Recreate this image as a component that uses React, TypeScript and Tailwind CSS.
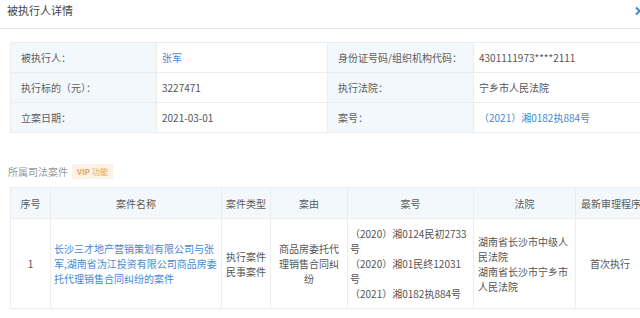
import { ReactNode } from "react";

const font = { fontFamily: '"Noto Sans CJK SC", "Liberation Sans", sans-serif' };

function Label({ children }: { children: ReactNode }) {
  return <td className="bg-[#f3f8fc] border border-[#ededed] pl-[10px] text-[#5c5c5c]">{children}</td>;
}

function Value({ children, link }: { children: ReactNode; link?: boolean }) {
  return (
    <td className={`border border-[#ededed] pl-[5px] ${link ? "text-[#3f8ad6]" : "text-[#555]"}`}>
      {children}
    </td>
  );
}

export default function App() {
  return (
    <div className="w-[640px] h-[318px] overflow-hidden bg-white text-[10px] leading-[15px]" style={font}>
      <div className="flex h-[29px] items-start justify-between border-b border-[#e6e6e6] pl-[7px] pt-[3px]">
        <h2 className="text-[11px] leading-[15px] text-[#444]">被执行人详情</h2>
        <svg width="8" height="10" viewBox="0 0 8 10" className="mt-[3px] mr-[-2px]">
          <path d="M2 1.5 L5.5 5 L2 8.5" stroke="#3f8ad6" strokeWidth="2" fill="none" />
        </svg>
      </div>

      <div className="pl-[10px] pt-[13px]">
        <table className="w-[640px] table-fixed border-collapse">
          <colgroup>
            <col className="w-[146px]" />
            <col className="w-[171px]" />
            <col className="w-[146px]" />
            <col />
          </colgroup>
          <tbody>
            <tr className="h-[30px]">
              <Label>被执行人：</Label>
              <Value link>张军</Value>
              <Label>身份证号码/组织机构代码：</Label>
              <Value>4301111973****2111</Value>
            </tr>
            <tr className="h-[30px]">
              <Label>执行标的（元）：</Label>
              <Value>3227471</Value>
              <Label>执行法院：</Label>
              <Value>宁乡市人民法院</Value>
            </tr>
            <tr className="h-[30px]">
              <Label>立案日期：</Label>
              <Value>2021-03-01</Value>
              <Label>案号：</Label>
              <Value link>（2021）湘0182执884号</Value>
            </tr>
          </tbody>
        </table>
      </div>

      <div className="flex items-center gap-[4px] pl-[8px] pt-[31px]">
        <span className="text-[#999]">所属司法案件</span>
        <span className="flex h-[15px] items-center bg-[#fcf1e5] px-[5px] text-[8px] text-[#e4a565]">
          <b className="mr-[2px] font-bold">VIP</b>功能
        </span>
      </div>

      <div className="pl-[10px] pt-[8px]">
        <table className="w-[660px] table-fixed border-collapse text-[#555]">
          <colgroup>
            <col className="w-[40px]" />
            <col className="w-[171px]" />
            <col className="w-[49px]" />
            <col className="w-[77px]" />
            <col className="w-[126px]" />
            <col className="w-[102px]" />
            <col />
          </colgroup>
          <thead>
            <tr className="h-[31px] bg-[#f3f8fc] text-[#5c5c5c]">
              <th className="font-normal border border-[#ededed]">序号</th>
              <th className="font-normal border border-[#ededed]">案件名称</th>
              <th className="font-normal border border-[#ededed]">案件类型</th>
              <th className="font-normal border border-[#ededed]">案由</th>
              <th className="font-normal border border-[#ededed]">案号</th>
              <th className="font-normal border border-[#ededed]">法院</th>
              <th className="font-normal border border-[#ededed] text-left pl-[5px] whitespace-nowrap">最新审理程序</th>
            </tr>
          </thead>
          <tbody>
            <tr className="h-[90px]">
              <td className="border border-[#ededed] text-center">1</td>
              <td className="border border-[#ededed] px-[3px] text-[#3f8ad6]">
                长沙三才地产营销策划有限公司与张军,湖南省沩江投资有限公司商品房委托代理销售合同纠纷的案件
              </td>
              <td className="border border-[#ededed] text-center px-[3px]">执行案件 民事案件</td>
              <td className="border border-[#ededed] text-center px-[6px]">商品房委托代理销售合同纠纷</td>
              <td className="border border-[#ededed] pl-[2px] pr-[2px]">
                <div className="flex flex-col">
                  <span>（2020）湘0124民初2733号</span>
                  <span>（2020）湘01民终12031号</span>
                  <span>（2021）湘0182执884号</span>
                </div>
              </td>
              <td className="border border-[#ededed] px-[4px]">
                <div>湖南省长沙市中级人民法院</div>
                <div>湖南省长沙市宁乡市人民法院</div>
              </td>
              <td className="border border-[#ededed] pl-[14px]">首次执行</td>
            </tr>
          </tbody>
        </table>
      </div>
    </div>
  );
}
